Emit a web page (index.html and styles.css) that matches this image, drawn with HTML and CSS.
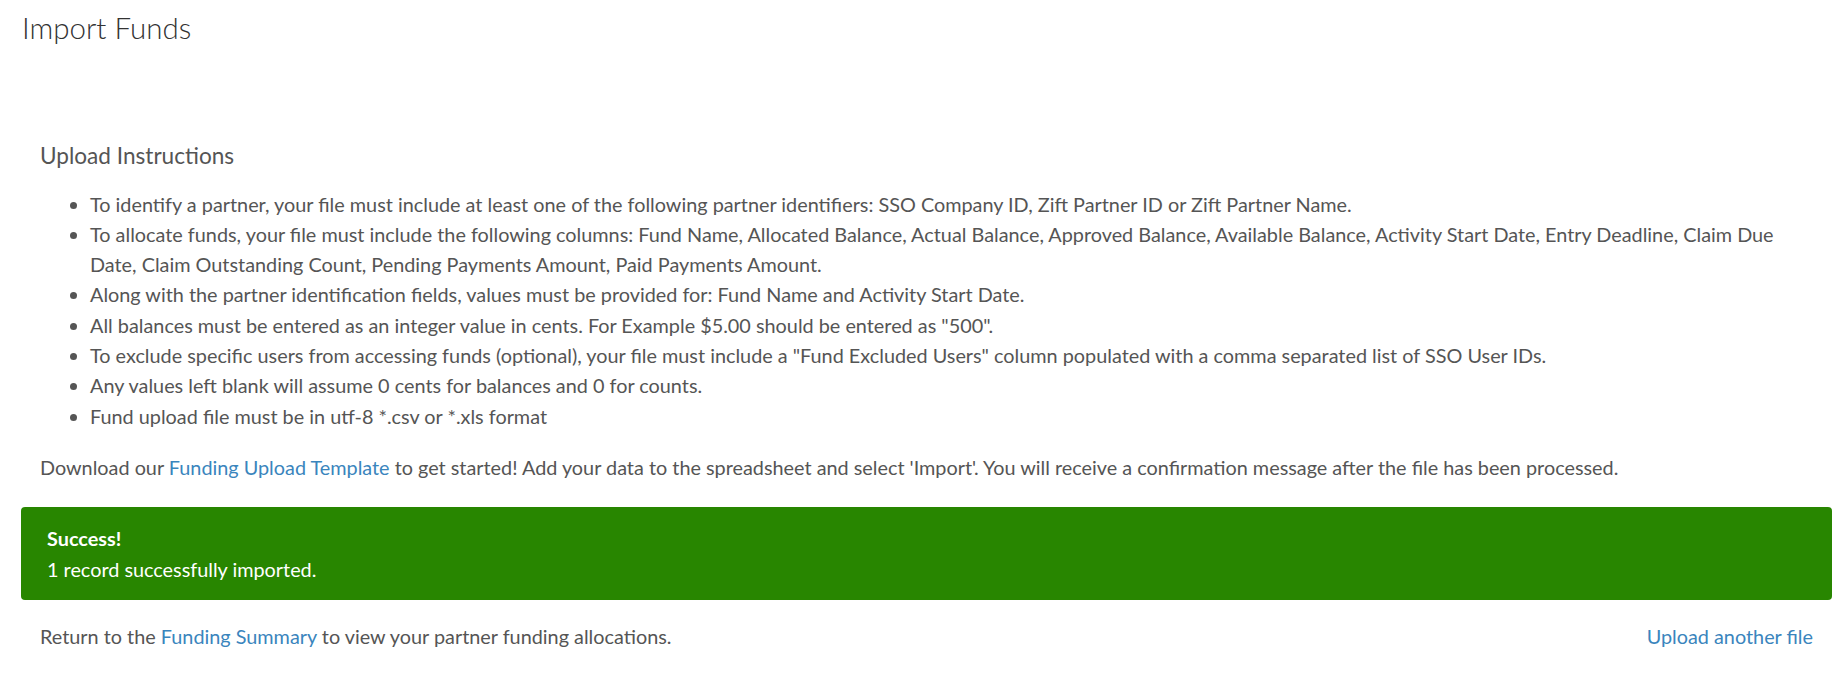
FILE: index.html
```html
<!DOCTYPE html>
<html lang="en">
<head>
<meta charset="utf-8">
<title>Import Funds</title>
<link rel="stylesheet" href="styles.css">
</head>
<body>
<div class="page">
  <h1 class="page-title">Import Funds</h1>
  <section class="instructions">
    <h2 class="section-title">Upload Instructions</h2>
    <ul class="rules">
      <li>To identify a partner, your file must include at least one of the following partner identifiers: SSO Company ID, Zift Partner ID or Zift Partner Name.</li>
      <li>To allocate funds, your file must include the following columns: Fund Name, Allocated Balance, Actual Balance, Approved Balance, Available Balance, Activity Start Date, Entry Deadline, Claim Due Date, Claim Outstanding Count, Pending Payments Amount, Paid Payments Amount.</li>
      <li>Along with the partner identification fields, values must be provided for: Fund Name and Activity Start Date.</li>
      <li>All balances must be entered as an integer value in cents. For Example $5.00 should be entered as "500".</li>
      <li>To exclude specific users from accessing funds (optional), your file must include a "Fund Excluded Users" column populated with a comma separated list of SSO User IDs.</li>
      <li>Any values left blank will assume 0 cents for balances and 0 for counts.</li>
      <li>Fund upload file must be in utf-8 *.csv or *.xls format</li>
    </ul>
    <p class="download">Download our <a href="#" class="link">Funding Upload Template</a> to get started! Add your data to the spreadsheet and select 'Import'. You will receive a confirmation message after the file has been processed.</p>
  </section>
  <div class="alert-success">
    <div class="alert-title">Success!</div>
    <div class="alert-text">1 record successfully imported.</div>
  </div>
  <div class="footer-row">
    <span>Return to the <a href="#" class="link">Funding Summary</a> to view your partner funding allocations.</span>
    <a href="#" class="link">Upload another file</a>
  </div>
</div>
</body>
</html>
```

FILE: styles.css
```css
html, body {
  margin: 0;
  padding: 0;
  background: #fff;
}
body {
  font-family: Lato, "Open Sans", "Liberation Sans", sans-serif;
  color: #555;
  font-size: 19.83px;
  line-height: 30.3px;
}
.page {
  padding: 11px 16px 0 21px;
}
.page-title {
  margin: 0 0 0 1px;
  font-size: 29.5px;
  line-height: 33.7px;
  font-weight: 300;
  color: #333;
}
.instructions {
  padding: 0 19px;
  margin-top: 97px;
}
.section-title {
  margin: 0;
  font-size: 22.6px;
  line-height: 28.3px;
  font-weight: 400;
  color: #555;
}
.rules {
  margin: 18.5px 0 0;
  padding-left: 50px;
}
.download {
  margin: 21.6px 0 0;
}
.link {
  color: #3a85bd;
  text-decoration: none;
}
.alert-success {
  margin-top: 24.2px;
  background: #288600;
  color: #fff;
  border-radius: 4px;
  padding: 16.5px 26px 15.9px;
}
.alert-title {
  font-weight: 700;
}
.footer-row {
  margin-top: 21px;
  padding: 0 19px;
  display: flex;
  justify-content: space-between;
}
```
